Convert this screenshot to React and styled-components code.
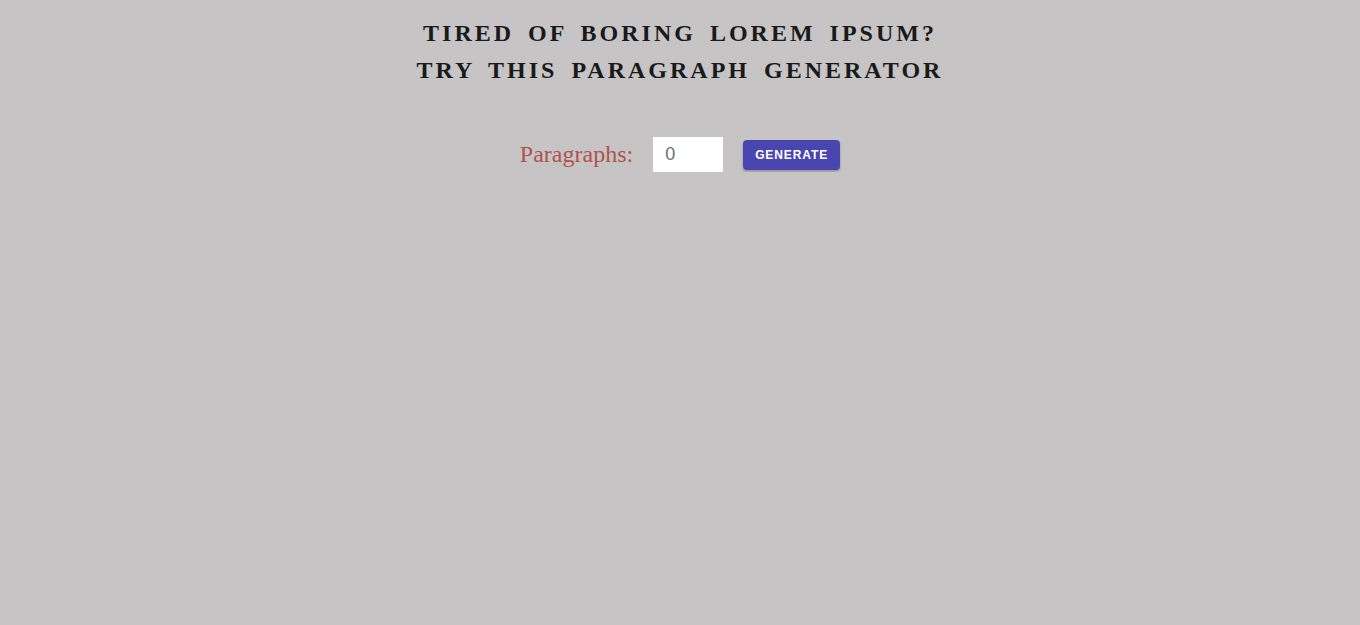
import React, { useState } from "react";
import styled, { createGlobalStyle } from "styled-components";

const Global = createGlobalStyle`
  html, body { margin: 0; padding: 0; }
  body { background: #c6c4c5; font-family: "Liberation Serif", "Times New Roman", serif; }
`;

const Page = styled.main`
  display: flex;
  flex-direction: column;
  align-items: center;
  padding-top: 15px;
`;

const Title = styled.h1`
  margin: 0;
  font-family: "Liberation Serif", "Times New Roman", serif;
  font-weight: 700;
  font-size: 24px;
  line-height: 37px;
  letter-spacing: 3px;
  word-spacing: 5px;
  text-transform: uppercase;
  text-align: center;
  color: #1a1a1a;
`;

const Form = styled.form`
  display: flex;
  align-items: center;
  gap: 20px;
  margin-top: 48px;
`;

const Label = styled.label`
  font-family: "Liberation Serif", "Times New Roman", serif;
  font-size: 24px;
  color: #b0524e;
`;

const NumberInput = styled.input`
  width: 70px;
  height: 35px;
  box-sizing: border-box;
  border: none;
  outline: none;
  padding: 0 12px;
  font-family: "Liberation Sans", Arial, sans-serif;
  font-size: 18px;
  color: #6e6e6e;
  background: #fff;
`;

const Button = styled.button`
  width: 97px;
  height: 30px;
  padding: 0;
  border: none;
  border-radius: 4px;
  background: #4a46b1;
  color: #fff;
  font-family: "Liberation Sans", Arial, sans-serif;
  font-weight: 700;
  font-size: 12px;
  letter-spacing: 0.9px;
  text-transform: uppercase;
  box-shadow: 0 2px 3px rgba(0, 0, 0, 0.25);
  cursor: pointer;
`;

export default function App() {
  const [count, setCount] = useState(0);
  return (
    <>
      <Global />
      <Page>
        <Title>
          Tired of boring lorem ipsum?
          <br />
          Try this paragraph generator
        </Title>
        <Form onSubmit={(e) => e.preventDefault()}>
          <Label htmlFor="amount">Paragraphs:</Label>
          <NumberInput
            id="amount"
            type="number"
            value={count}
            onChange={(e) => setCount(e.target.value)}
          />
          <Button type="submit">Generate</Button>
        </Form>
      </Page>
    </>
  );
}
